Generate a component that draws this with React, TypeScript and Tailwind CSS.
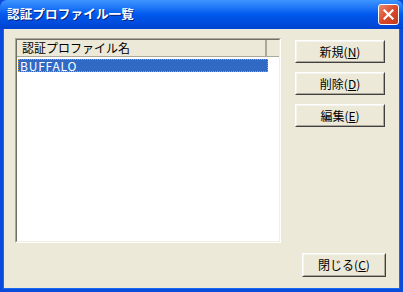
import React from "react";

const FONT = { fontFamily: '"MS UI Gothic", "Noto Sans CJK JP", sans-serif' };

function Btn({
  label,
  mnemonic,
  className,
}: {
  label: string;
  mnemonic: string;
  className?: string;
}) {
  return (
    <button
      type="button"
      className={`flex h-[23px] items-center justify-center border border-t-white border-l-white border-b-[#404040] border-r-[#404040] bg-[#ECE9D8] p-0 text-[12px] leading-none text-black ${className ?? ""}`}
    >
      <span className="flex h-full w-full items-center justify-center border border-t-[#F5F4EE] border-l-[#F5F4EE] border-b-[#ACA899] border-r-[#ACA899]">
        {label}(<span className="underline">{mnemonic}</span>)
      </span>
    </button>
  );
}

export default function App() {
  return (
    <div
      className="flex h-[292px] w-[403px] flex-col overflow-hidden bg-[#0A4BDB]"
      style={FONT}
    >
      {/* title bar */}
      <div className="flex h-[29px] shrink-0 items-center justify-between rounded-t-[7px] bg-gradient-to-b from-[#3D95FF] via-[#0058EE] to-[#0043CF] pl-[7px] pr-[4px]">
        <span className="text-[12.5px] font-bold tracking-[0.2px] text-white [text-shadow:1px_1px_0_#0A1F80]">
          認証プロファイル一覧
        </span>
        <div className="flex h-[21px] w-[21px] items-center justify-center rounded-[3px] border border-white bg-gradient-to-br from-[#E8876A] via-[#D9492A] to-[#C23A1E]">
          <svg width="11" height="11" viewBox="0 0 11 11">
            <path d="M1.5 1.5 L9.5 9.5 M9.5 1.5 L1.5 9.5" stroke="white" strokeWidth="2.2" strokeLinecap="square" />
          </svg>
        </div>
      </div>

      {/* body */}
      <div className="mx-[3px] mb-[3px] flex flex-1 flex-col border-b border-l border-r border-[#166AEE] bg-[#ECE9D8]">
        <div className="flex pl-[11px] pt-[9px]">
          {/* list view */}
          <div className="h-[205px] w-[266px] border border-t-[#ACA899] border-l-[#ACA899] border-b-white border-r-white">
            <div className="flex h-full w-full flex-col border border-t-[#716F64] border-l-[#716F64] border-b-[#F1EFE2] border-r-[#F1EFE2] bg-white">
              <div className="flex h-[17px] shrink-0 border-b border-[#ACA899] bg-[#ECE9D8]">
                <div className="flex w-[250px] items-center border-r-2 border-r-[#ACA899] pl-[5px] text-[12px] leading-none text-black">
                  認証プロファイル名
                </div>
                <div className="flex-1" />
              </div>
              <div className="ml-[1px] mt-[2px] flex h-[13px] w-[250px] items-center border border-dotted border-[#CE9539] bg-[#316AC5] pl-[1px] text-[12px] leading-none tracking-[0.8px] text-white">
                BUFFALO
              </div>
            </div>
          </div>

          {/* buttons */}
          <div className="ml-[14px] mt-[2px] flex flex-col gap-[9px]">
            <Btn label="新規" mnemonic="N" className="w-[90px]" />
            <Btn label="削除" mnemonic="D" className="w-[90px]" />
            <Btn label="編集" mnemonic="E" className="w-[90px]" />
          </div>
        </div>

        <div className="mt-[10px] flex justify-end pr-[13px]">
          <Btn label="閉じる" mnemonic="C" className="h-[24px] w-[84px]" />
        </div>
      </div>
    </div>
  );
}
